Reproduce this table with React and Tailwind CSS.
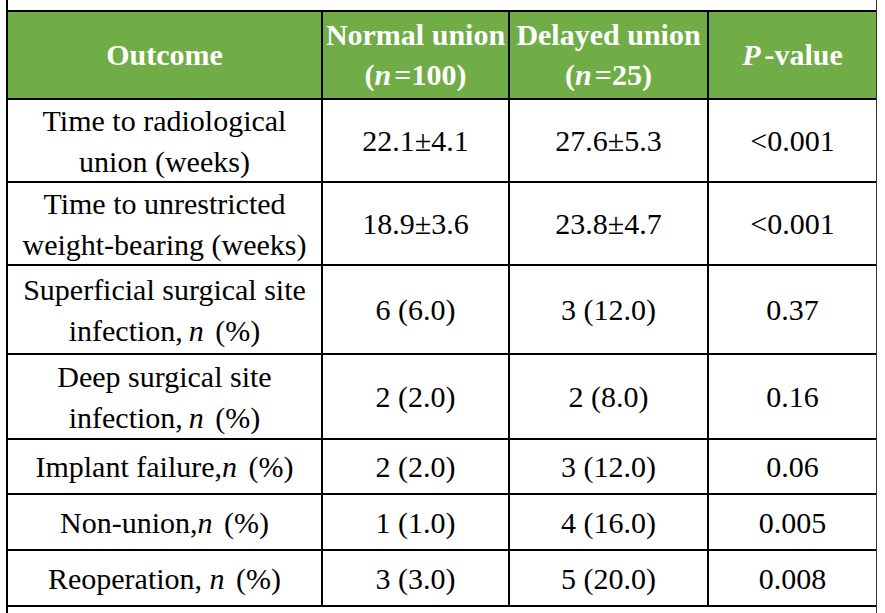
import React from 'react';

const serif = { fontFamily: '"Liberation Serif", "Times New Roman", serif' };

const N = ({ bold }) => (
  <i className={bold ? 'mr-[3px]' : 'mr-[4px]'}>n</i>
);

const rows = [
  { label: <>Time to radiological<br />union (weeks)</>, a: '22.1±4.1', b: '27.6±5.3', p: '<0.001' },
  { label: <>Time to unrestricted<br />weight-bearing (weeks)</>, a: '18.9±3.6', b: '23.8±4.7', p: '<0.001' },
  { label: <>Superficial surgical site<br />infection,&thinsp;<N /> (%)</>, a: '6 (6.0)', b: '3 (12.0)', p: '0.37' },
  { label: <>Deep surgical site<br />infection,&thinsp;<N /> (%)</>, a: '2 (2.0)', b: '2 (8.0)', p: '0.16' },
  { label: <>Implant failure,<N /> (%)</>, a: '2 (2.0)', b: '3 (12.0)', p: '0.06' },
  { label: <>Non-union,<N /> (%)</>, a: '1 (1.0)', b: '4 (16.0)', p: '0.005' },
  { label: <>Reoperation, <N /> (%)</>, a: '3 (3.0)', b: '5 (20.0)', p: '0.008' },
];

const Head = ({ children }) => (
  <div className="bg-[#70ad47] text-white font-bold text-[30px] leading-[40px] flex items-center justify-center text-center whitespace-nowrap overflow-hidden">
    <div>{children}</div>
  </div>
);

const Cell = ({ children }) => (
  <div className="bg-white text-black text-[30px] leading-[41px] flex items-center justify-center text-center whitespace-nowrap overflow-hidden">
    <div>{children}</div>
  </div>
);

export default function App() {
  return (
    <div className="w-[885px] h-[613px] bg-white overflow-hidden" style={serif}>
      <div className="ml-[6px] w-[871px] h-full border-l-2 border-black border-r border-r-[#333] pt-[10px]">
        <div className="grid w-[868px] grid-cols-[313px_185px_197px_167px] grid-rows-[86px_81px_81px_87px_83px_53px_54px_54px] gap-[2px] bg-black border-t-2 border-b-2 border-black">
          <Head>Outcome</Head>
          <Head>Normal union<br />(<N bold />=100)</Head>
          <Head>Delayed union<br />(<N bold />=25)</Head>
          <Head><i className="mr-[4px]">P</i>-value</Head>
          {rows.map((r, i) => (
            <React.Fragment key={i}>
              <Cell>{r.label}</Cell>
              <Cell>{r.a}</Cell>
              <Cell>{r.b}</Cell>
              <Cell>{r.p}</Cell>
            </React.Fragment>
          ))}
        </div>
      </div>
    </div>
  );
}
